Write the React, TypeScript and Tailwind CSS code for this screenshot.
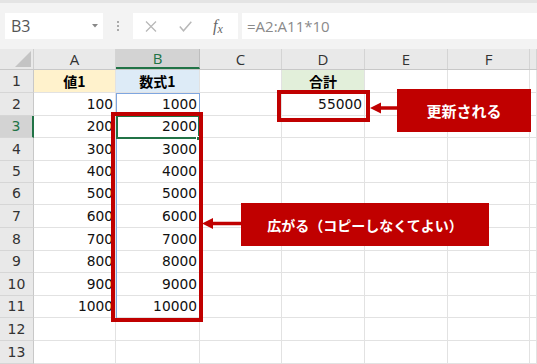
import React from "react";

const colW = ["w-[82px]", "w-[84px]", "w-[82px]", "w-[83px]", "w-[83px]", "w-[82px]", "flex-1"];
const letters = ["A", "B", "C", "D", "E", "F", ""];
const heights = [23, 23, 22, 23, 22, 22, 23, 23, 22, 23, 22, 23, 23];

type Cell = { v?: string; bg?: string; bold?: boolean };

function rowCells(r: number): Cell[] {
  const cells: Cell[] = [{}, {}, {}, {}, {}, {}, {}];
  if (r === 1) {
    cells[0] = { v: "値1", bg: "bg-[#fff2cc]", bold: true };
    cells[1] = { v: "数式1", bg: "bg-[#ddebf7]", bold: true };
    cells[3] = { v: "合計", bg: "bg-[#e2efda]", bold: true };
  } else if (r >= 2 && r <= 11) {
    cells[0] = { v: String((r - 1) * 100) };
    cells[1] = { v: String((r - 1) * 1000) };
    if (r === 2) cells[3] = { v: "55000" };
  }
  return cells;
}

export default function App() {
  return (
    <div className="relative w-[537px] h-[364px] overflow-hidden bg-white font-['DejaVu_Sans',sans-serif]">
      {/* Ribbon / formula bar */}
      <div className="h-[49px] bg-[#f3f3f3] border-t-[3px] border-[#e4e4e4] flex items-start pt-[10px]">
        <div className="ml-[5px] w-[98px] h-[26px] bg-white flex items-center justify-between pl-[6px] pr-[5px]">
          <span className="text-[16px] text-[#555] font-['Open_Sans',sans-serif] leading-none">B3</span>
          <svg width="6" height="4" viewBox="0 0 6 4"><polygon points="0,0 6,0 3,3.5" fill="#888" /></svg>
        </div>
        <div className="w-[30px] h-[26px] flex flex-col items-center justify-center gap-[2px]">
          <span className="w-[2px] h-[2px] bg-[#aaa]" />
          <span className="w-[2px] h-[2px] bg-[#aaa]" />
          <span className="w-[2px] h-[2px] bg-[#aaa]" />
        </div>
        <div className="w-[105px] h-[26px] bg-white flex items-center">
          <svg className="ml-[12px]" width="12" height="11" viewBox="0 0 12 11">
            <path d="M1 0.5 L11 10.5 M11 0.5 L1 10.5" stroke="#b8b8b8" strokeWidth="1.3" fill="none" />
          </svg>
          <svg className="ml-[22px]" width="13" height="11" viewBox="0 0 13 11">
            <path d="M0.8 5.5 L4.5 9.8 L12.3 0.8" stroke="#b8b8b8" strokeWidth="1.5" fill="none" />
          </svg>
          <span className="ml-[21px] italic text-[16px] text-[#666] font-['Liberation_Serif',serif] leading-none">
            f<span className="text-[12px] align-[-2px]">x</span>
          </span>
        </div>
        <div className="ml-[4px] flex-1 h-[26px] bg-white flex items-center pl-[5px]">
          <span className="text-[15px] text-[#8a8a8a] font-['Open_Sans',sans-serif] leading-none">=A2:A11*10</span>
        </div>
      </div>

      {/* Column header row */}
      <div className="flex h-[21px] bg-[#e9e9e9] border-b border-[#c8c8c8]">
        <div className="relative w-[34px] border-r border-[#cfcfcf]">
          <svg className="absolute left-0 top-0" width="34" height="20" viewBox="0 0 34 20">
            <polygon points="15,18 31,18 31,2" fill="#c4c4c4" />
          </svg>
        </div>
        {letters.map((l, i) => (
          <div
            key={i}
            className={`${colW[i]} flex items-center justify-center text-[15px] font-['Open_Sans',sans-serif] ${
              i === 1
                ? "bg-[#d3d3d3] border-b-2 border-b-[#217346] text-[#217346] border-r border-r-[#bdbdbd]"
                : "text-[#333] border-r border-[#d4d4d4]"
            }`}
          >
            {l}
          </div>
        ))}
      </div>

      {/* Rows */}
      {heights.map((h, idx) => {
        const r = idx + 1;
        const cells = rowCells(r);
        return (
          <div key={r} className={`flex ${h === 23 ? "h-[23px]" : "h-[22px]"}`}>
            <div
              className={`w-[34px] flex items-center justify-center text-[14px] border-b border-[#d6d6d6] ${
                r === 3
                  ? "bg-[#d3d3d3] text-[#217346] border-r-2 border-r-[#217346]"
                  : "bg-[#e9e9e9] text-[#333] border-r border-r-[#c8c8c8]"
              }`}
            >
              {r}
            </div>
            {cells.map((c, i) => (
              <div
                key={i}
                className={`${colW[i]} ${c.bg ?? ""} border-r border-b border-[#e2e2e2] flex items-center overflow-hidden whitespace-nowrap ${
                  c.bold
                    ? "justify-center font-['Noto_Sans_CJK_JP',sans-serif] font-bold text-[14px] text-black"
                    : "justify-end pr-[2px] text-[13.8px] text-[#111]"
                }`}
              >
                {c.v}
              </div>
            ))}
          </div>
        );
      })}

      {/* Spill range (blue) */}
      <div className="absolute left-[116px] top-[93px] w-[84px] h-[226px] border border-[#7ea6e0]" />
      {/* Active cell B3 */}
      <div className="absolute left-[116px] top-[115px] w-[84px] h-[24px] border-2 border-[#217346]" />
      <div className="absolute left-[196px] top-[136px] w-[5px] h-[5px] bg-[#217346] border border-white" />

      {/* Red highlight boxes */}
      <div className="absolute left-[111px] top-[112px] w-[92px] h-[210px] border-4 border-[#c00000]" />
      <div className="absolute left-[277px] top-[90px] w-[93px] h-[32px] border-4 border-[#c00000]" />

      {/* Arrows */}
      <svg className="absolute left-0 top-0" width="537" height="364" viewBox="0 0 537 364">
        <line x1="380" y1="108" x2="398" y2="108" stroke="#c00000" strokeWidth="3.5" />
        <polygon points="370,108 381,102.5 381,113.5" fill="#c00000" />
        <line x1="212" y1="223.5" x2="242" y2="223.5" stroke="#c00000" strokeWidth="3.5" />
        <polygon points="202,223.5 213,218 213,229" fill="#c00000" />
      </svg>

      {/* Callouts */}
      <div className="absolute left-[397px] top-[89px] w-[134px] h-[43px] bg-[#c00000] flex items-center justify-center">
        <span className="text-white font-bold text-[15px] font-['Noto_Sans_CJK_JP',sans-serif] leading-none">更新される</span>
      </div>
      <div className="absolute left-[241px] top-[203px] w-[248px] h-[43px] bg-[#c00000] flex items-center justify-center">
        <span className="text-white font-bold text-[14px] font-['Noto_Sans_CJK_JP',sans-serif] leading-none">広がる（コピーしなくてよい）</span>
      </div>
    </div>
  );
}
